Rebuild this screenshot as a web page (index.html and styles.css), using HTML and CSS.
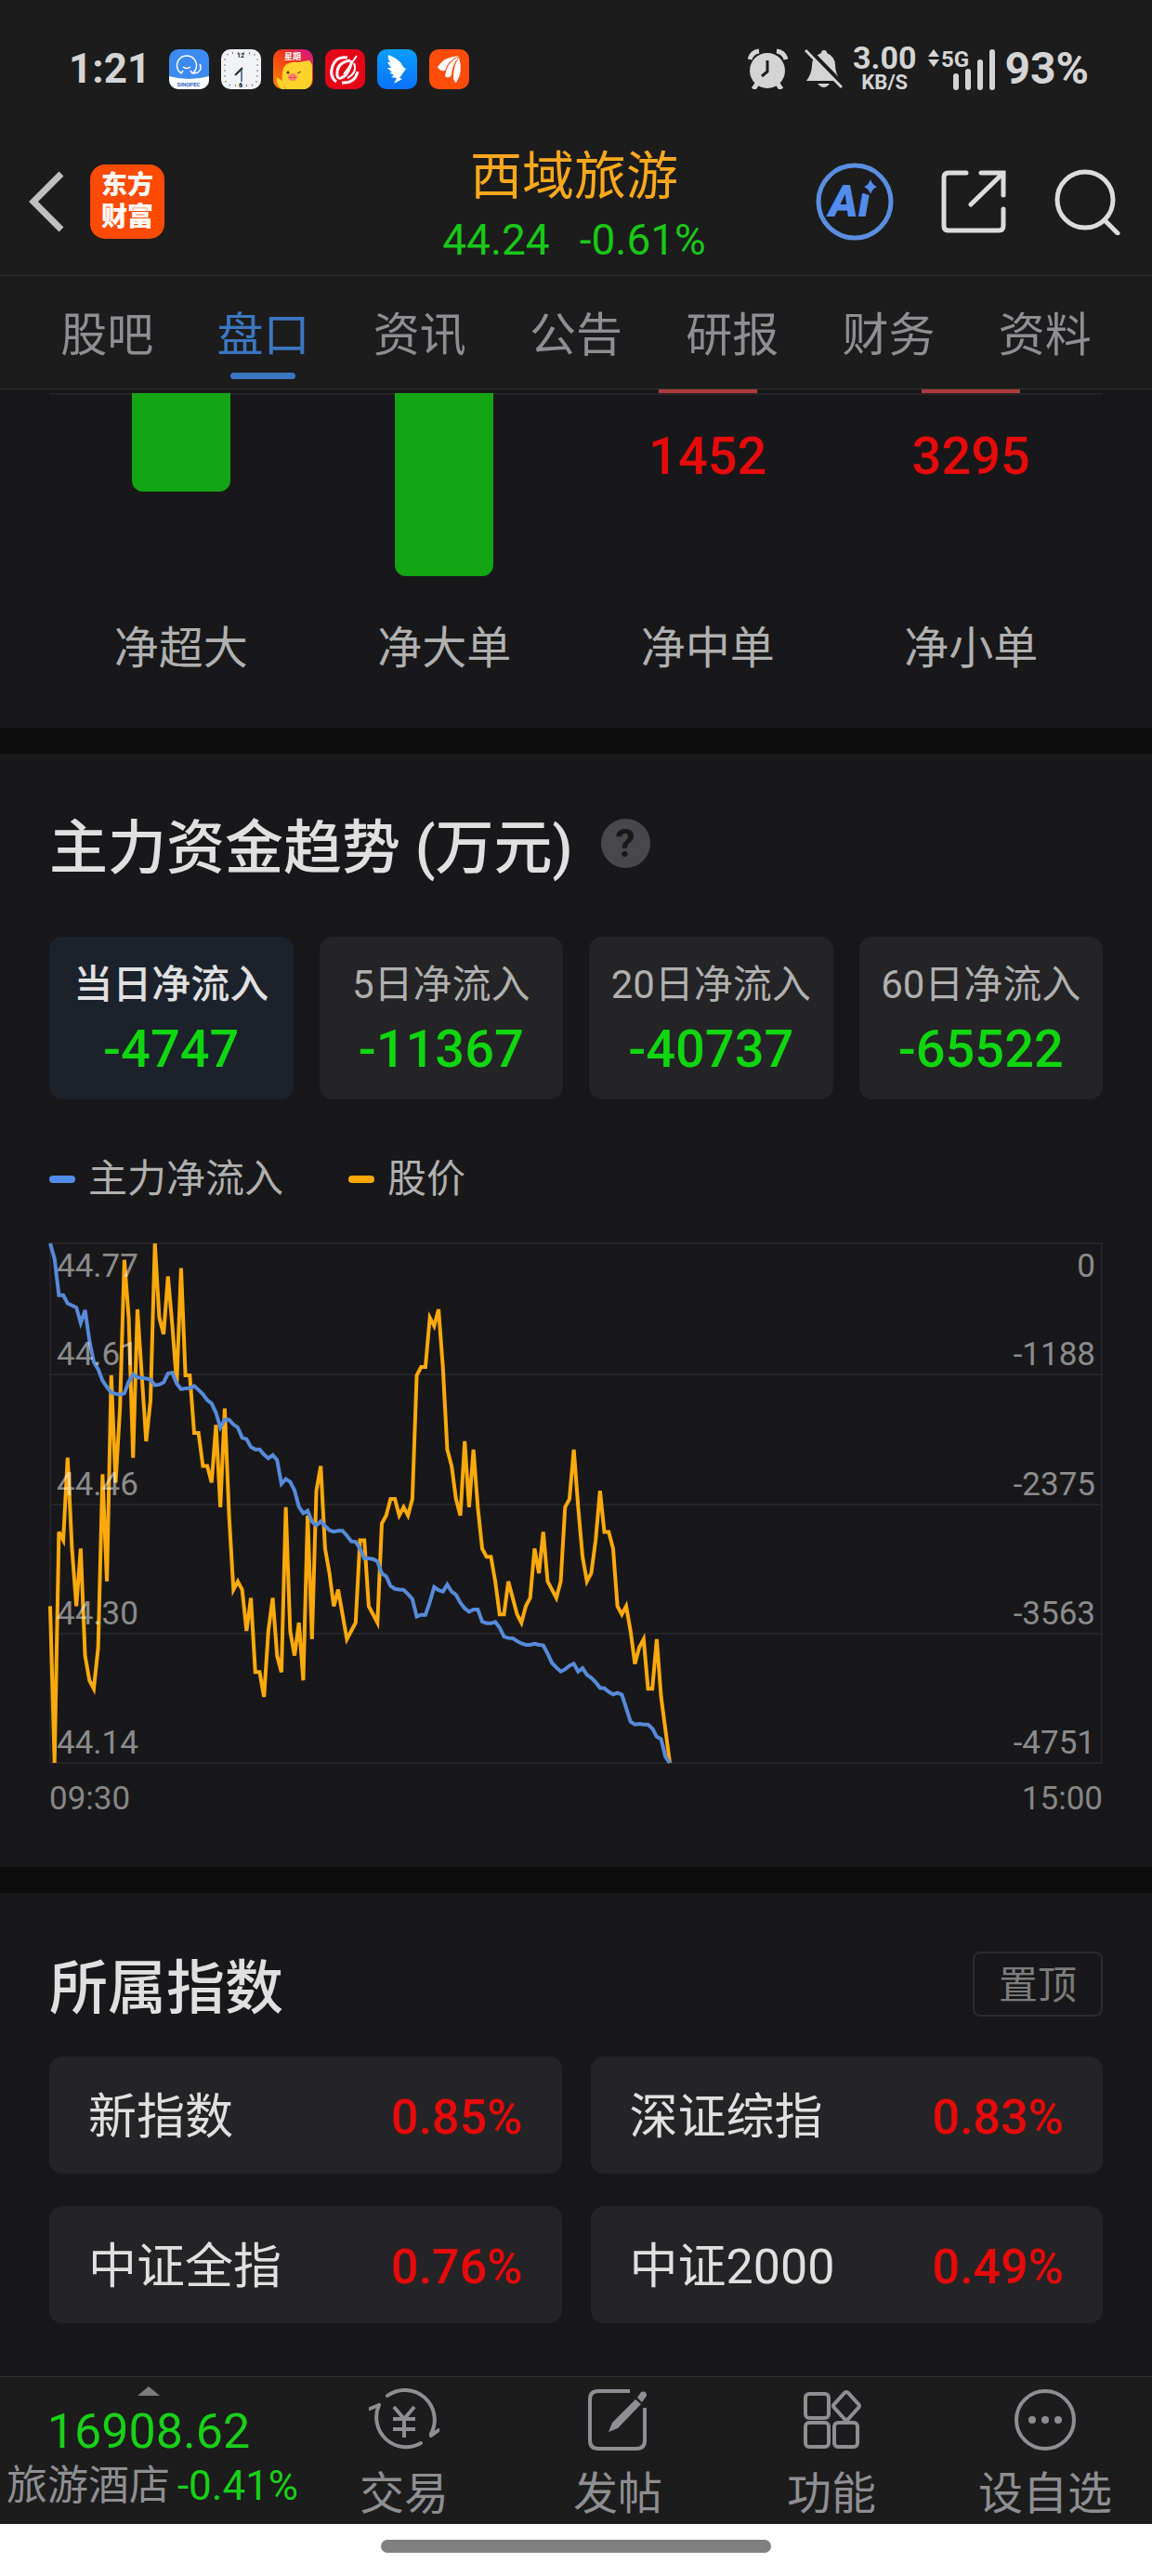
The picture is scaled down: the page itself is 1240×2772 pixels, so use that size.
FILE: index.html
```
<!DOCTYPE html>
<html lang="zh-CN">
<head>
    <meta charset="UTF-8">
    <meta name="viewport" content="width=device-width, initial-scale=1.0">
    <title>西域旅游</title>
    <link rel="stylesheet" href="styles.css">
</head>
<body>
    <div class="status-bar">
        <div class="status-left">
            <span class="clock">1:21</span>
            <svg class="app-icon" viewBox="0 0 43 43">
                <rect width="43" height="43" rx="10" fill="#3d8bf0"/>
                <path d="M0 29q21 6 43 0v4a10 10 0 0 1-10 10H10A10 10 0 0 1 0 33z" fill="#fff"/>
                <path d="M13 26a10.500 10.500 0 1 1 12 0l-2-3M13 26l2-3M15 19q4 3 8 0M33 16q3 5-2 9l-5 1" fill="none" stroke="#fff" stroke-width="1.500"/>
                <text x="21" y="40" class="sinopec">SINOPEC</text>
            </svg>
            <svg class="app-icon" viewBox="0 0 43 43">
                <rect width="43" height="43" rx="10" fill="#f1f3f6"/>
                <rect x="4" y="4" width="35" height="35" rx="8" fill="none" stroke="#777" stroke-width="2" stroke-dasharray="1 5"/>
                <path d="M22 21v14" stroke="#6a7fa0" stroke-width="2"/>
                <path d="M23 20l-8 8" stroke="#222c40" stroke-width="2"/>
                <text x="21" y="9" class="dial">12</text>
                <text x="21" y="41" class="dial">6</text>
            </svg>
            <svg class="app-icon" viewBox="0 0 43 43">
                <defs>
                    <linearGradient id="pig" x1="0" y1="1" x2="1" y2="0">
                        <stop offset="0" stop-color="#ff8a00"/>
                        <stop offset="0.6" stop-color="#f2331a"/>
                        <stop offset="1" stop-color="#d1159a"/>
                    </linearGradient>
                    <linearGradient id="wing" x1="0" y1="0" x2="0" y2="1">
                        <stop offset="0" stop-color="#0a9dff"/>
                        <stop offset="1" stop-color="#0b72fb"/>
                    </linearGradient>
                </defs>
                <rect width="43" height="43" rx="10" fill="url(#pig)"/>
                <path d="M10 24q2-12 17-10l12-2q4 4 3 10v11a10 10 0 0 1-8 10H14q-6-8-4-19z" fill="#ffd22e"/>
                <path d="M4 30l7 5 2 8H9q-6-5-5-13z" fill="#ffd22e"/>
                <ellipse cx="21" cy="30" rx="5" ry="4" fill="#ff7f6a"/>
                <circle cx="16" cy="25" r="1.500" fill="#532"/>
                <path d="M26 26l4-2" stroke="#532"/>
                <path d="M19 30v1M23 30v1" stroke="#b03a2a" stroke-width="2"/>
                <text x="21" y="11" class="week">星期</text>
            </svg>
            <svg class="app-icon" viewBox="0 0 43 43">
                <rect width="43" height="43" rx="10" fill="#e60517"/>
                <g fill="none" stroke="#fff" stroke-width="3">
                    <path d="M24 9Q12 7 8 18t4 17M18 36q14 1 17-12M27 12Q14 14 13 24t6 6q6-2 10-18"/>
                    <path d="M34 7L20 27M31 15q4 10-7 16" stroke-width="2"/>
                </g>
            </svg>
            <svg class="app-icon" viewBox="0 0 43 43">
                <rect width="43" height="43" rx="10" fill="url(#wing)"/>
                <path d="M12 6q13 5 16 13l3 2-7 10 3 1-9 5 3-6-6-1 3-2-5-3h3l-5-5h4l-4-6h3q-3-4-2-8z" fill="#fff"/>
            </svg>
            <svg class="app-icon" viewBox="0 0 43 43">
                <rect width="43" height="43" rx="10" fill="#ff4c0a"/>
                <path d="M9 19Q16 8 32 7 20 12 17 23q-6 1-8-4zM17 29Q19 13 32 8q-8 10-8 20-3 4-7 1zM26 30q0-13 6-21 5 15-3 27-3-1-3-6z" fill="#fff"/>
            </svg>
        </div>
        <div class="status-right">
            <svg class="status-icon" viewBox="0 0 43 44">
                <circle cx="21" cy="24" r="19" fill="#d4d4d4"/>
                <path d="M10 38l-4 6M32 38l4 6M2 12q2-8 10-9M41 12q-2-8-10-9" fill="none" stroke="#d4d4d4" stroke-width="5"/>
                <path d="M21 13v12l-6 5" fill="none" stroke="#1c1c1c" stroke-width="3"/>
            </svg>
            <svg class="status-icon bell" viewBox="0 0 41 44">
                <path d="M21 2q3 0 3 3 9 4 9 13 0 9 6 17H2q6-8 6-17Q8 9 18 5q0-3 3-3zM14 38h13q-6 8-13 0z" fill="#d4d4d4"/>
                <path d="M3 0l40 41" stroke="#1c1c1c" stroke-width="5"/>
                <path d="M1 2l39 40" stroke="#d4d4d4" stroke-width="3"/>
            </svg>
            <div class="speed"><b>3.00</b><span>KB/S</span></div>
            <svg class="signal" viewBox="0 0 74 52">
                <path d="M0 13l6-8 6 8zM0 16h12l-6 8z" fill="#d4d4d4"/>
                <text x="14" y="24" class="net">5G</text>
                <path d="M30 34v12M43 29v17M56 19v27M69 8v38" stroke="#d4d4d4" stroke-width="6" stroke-linecap="round"/>
            </svg>
            <span class="battery">93%</span>
        </div>
    </div>

    <header class="header">
        <div class="header-left">
            <button type="button" class="icon-btn" aria-label="返回">
                <svg width="40" height="66" viewBox="0 0 40 66"><path d="M36 3L6 33l30 30" fill="none" stroke="#bfbfbf" stroke-width="7"/></svg>
            </button>
            <a href="#" class="logo">东方<br>财富</a>
        </div>
        <div class="stock">
            <h1>西域旅游</h1>
            <p><span>44.24</span><span>-0.61%</span></p>
        </div>
        <div class="header-right">
            <button type="button" class="icon-btn" aria-label="AI 助手">
                <svg width="84" height="84" viewBox="0 0 84 84">
                    <circle cx="42" cy="42" r="39" fill="none" stroke="#5a8ee0" stroke-width="5"/>
                    <text x="14" y="58" class="ai-text">Ai</text>
                    <circle cx="58" cy="25" r="10" fill="#1c1c1c"/>
                    <path d="M59 18q2 6 7 8-5 2-7 8-2-6-7-8 5-2 7-8z" fill="#528cec"/>
                </svg>
            </button>
            <button type="button" class="icon-btn" aria-label="分享">
                <svg width="70" height="70" viewBox="0 0 70 70">
                    <path d="M27 4H8q-5 0-5 5v52q0 5 5 5h54q5 0 5-5V43M43 4h24v24M66 5L32 38" fill="none" stroke="#dcdcdc" stroke-width="5" stroke-linecap="round"/>
                </svg>
            </button>
            <button type="button" class="icon-btn" aria-label="搜索">
                <svg width="72" height="72" viewBox="0 0 72 72">
                    <circle cx="34" cy="34" r="30" fill="none" stroke="#dcdcdc" stroke-width="5"/>
                    <path d="M55 56l14 14" stroke="#dcdcdc" stroke-width="5" stroke-linecap="round"/>
                </svg>
            </button>
        </div>
    </header>

    <nav class="tabs">
        <a href="#">股吧</a>
        <a href="#" class="active">盘口</a>
        <a href="#">资讯</a>
        <a href="#">公告</a>
        <a href="#">研报</a>
        <a href="#">财务</a>
        <a href="#">资料</a>
    </nav>

    <main>
        <section class="orders">
            <div class="order-bars">
                <div class="order"><div class="bar bar-down" style="height: 106px"></div></div>
                <div class="order"><div class="bar bar-down" style="height: 197px"></div></div>
                <div class="order"><div class="bar bar-up"></div><span class="amount">1452</span></div>
                <div class="order"><div class="bar bar-up"></div><span class="amount">3295</span></div>
            </div>
            <div class="order-labels">
                <span>净超大</span>
                <span>净大单</span>
                <span>净中单</span>
                <span>净小单</span>
            </div>
        </section>

        <section class="trend">
            <div class="trend-title">
                <h2>主力资金趋势 (万元)</h2>
                <button type="button" class="help" aria-label="说明">?</button>
            </div>
            <div class="periods">
                <button type="button" class="period active"><span>当日净流入</span><b>-4747</b></button>
                <button type="button" class="period"><span>5日净流入</span><b>-11367</b></button>
                <button type="button" class="period"><span>20日净流入</span><b>-40737</b></button>
                <button type="button" class="period"><span>60日净流入</span><b>-65522</b></button>
            </div>
            <div class="legend">
                <span class="legend-item flow">主力净流入</span>
                <span class="legend-item price">股价</span>
            </div>
            <div class="chart">
                <svg class="lines" viewBox="0 0 241 560" preserveAspectRatio="none">
                    <polyline id="priceLine" class="price-line"/>
                    <polyline id="flowLine" class="flow-line"/>
                </svg>
                <div class="band first">
                    <div><span>44.77</span><span>0</span></div>
                    <div><span>44.61</span><span>-1188</span></div>
                </div>
                <div class="band"><div><span>44.46</span><span>-2375</span></div></div>
                <div class="band"><div><span>44.30</span><span>-3563</span></div></div>
                <div class="band"><div><span>44.14</span><span>-4751</span></div></div>
            </div>
            <div class="times"><span>09:30</span><span>15:00</span></div>
        </section>

        <section class="indices">
            <div class="indices-title">
                <h2>所属指数</h2>
                <button type="button" class="pin">置顶</button>
            </div>
            <div class="index-grid">
                <a href="#" class="index"><span>新指数</span><b>0.85%</b></a>
                <a href="#" class="index"><span>深证综指</span><b>0.83%</b></a>
                <a href="#" class="index"><span>中证全指</span><b>0.76%</b></a>
                <a href="#" class="index"><span>中证2000</span><b>0.49%</b></a>
            </div>
        </section>
    </main>

    <footer class="toolbar">
        <a href="#" class="sector">
            <svg width="24" height="10" viewBox="0 0 24 10"><path d="M0 10L12 0l12 10z" fill="#7d7d80"/></svg>
            <b>16908.62</b>
            <span class="sector-row"><span>旅游酒店</span><i>-0.41%</i></span>
        </a>
        <button type="button" class="tool">
            <svg width="76" height="70" viewBox="0 0 76 70">
                <path d="M20 9A32 32 0 0 1 67 50M56 60A32 32 0 0 1 11 19M1 23l10-4v0M67 52l8-6" fill="none" stroke="#8e8e93" stroke-width="4" stroke-linecap="round"/>
                <path d="M27 21l11 13 11-13M38 34v20M26 34h24M26 45h24" fill="none" stroke="#8e8e93" stroke-width="4"/>
            </svg>
            交易
        </button>
        <button type="button" class="tool">
            <svg width="66" height="70" viewBox="0 0 66 70">
                <path d="M46 4H12q-9 0-9 9v44q0 9 9 9h41q9 0 9-9V22" fill="none" stroke="#8e8e93" stroke-width="4"/>
                <path d="M52 13l6 5-25 26-10 4 4-10zM54 11l4-6q6-2 6 4l-5 7z" fill="#8e8e93"/>
            </svg>
            发帖
        </button>
        <button type="button" class="tool">
            <svg width="64" height="70" viewBox="0 0 64 70">
                <g fill="none" stroke="#8e8e93" stroke-width="4">
                    <rect x="4" y="7" width="25" height="26" rx="4"/>
                    <rect x="4" y="38" width="25" height="26" rx="4"/>
                    <rect x="35" y="38" width="25" height="26" rx="4"/>
                    <path d="M46 6q2-2 4 0l11 12q2 2 0 4L50 34q-2 2-4 0L35 22q-2-2 0-4z"/>
                </g>
            </svg>
            功能
        </button>
        <button type="button" class="tool">
            <svg width="68" height="70" viewBox="0 0 68 70">
                <circle cx="34" cy="35" r="31" fill="none" stroke="#8e8e93" stroke-width="4"/>
                <g fill="#8e8e93"><circle cx="20" cy="35" r="4"/><circle cx="34" cy="35" r="4"/><circle cx="48" cy="35" r="4"/></g>
            </svg>
            设自选
        </button>
    </footer>
    <div class="home-bar"><span></span></div>

    <script src="chart.js"></script>
</body>
</html>
```
FILE: styles.css
```
* { box-sizing: border-box; }
body { margin: 0; background: #18181a; color: #e0e0e0; font-family: Roboto, "Noto Sans CJK SC", sans-serif; }
h1, h2, p { margin: 0; font-weight: 400; }
b { font-weight: 400; }
i { font-style: normal; }
a { color: inherit; text-decoration: none; }
button { padding: 0; border: none; background: none; color: inherit; font-family: inherit; cursor: pointer; }
svg { display: block; flex: none; }

/* status bar */
.status-bar { display: flex; justify-content: space-between; align-items: flex-start; height: 138px; padding: 48px 68px 0 74px; background: #1c1c1c; color: #d4d4d4; }
.status-left, .status-right { display: flex; align-items: center; height: 52px; }
.status-left { gap: 13px; }
.clock { width: 95px; font-size: 44px; font-weight: 700; line-height: 44px; }
.app-icon { width: 43px; height: 43px; }
.sinopec { font-size: 6px; font-weight: 700; fill: #1d5fc0; text-anchor: middle; }
.dial { font-size: 7px; font-weight: 700; fill: #222; text-anchor: middle; }
.week { font-size: 9px; font-weight: 700; fill: #fff; text-anchor: middle; }
.status-icon { width: 43px; height: 44px; }
.bell { width: 41px; margin-left: 18px; }
.speed { display: flex; flex-direction: column; align-items: center; margin: 0 13px 0 11px; }
.speed b { font-size: 34px; font-weight: 700; line-height: 30px; }
.speed span { font-size: 22px; font-weight: 700; line-height: 24px; }
.signal { width: 74px; height: 52px; overflow: visible; }
.net { font-size: 24px; font-weight: 700; fill: #d4d4d4; }
.battery { margin-left: 8px; font-size: 48px; font-weight: 700; line-height: 48px; }

/* header */
.header { display: grid; grid-template-columns: 1fr auto 1fr; align-items: center; height: 159px; padding: 0 34px 0 30px; border-bottom: 1px solid #333; background: #1c1c1c; }
.header-left, .header-right { display: flex; align-items: center; }
.header-left { gap: 27px; }
.header-right { justify-content: flex-end; gap: 51px; }
.logo { width: 80px; height: 80px; padding-top: 6px; border-radius: 16px; background: #ff4a04; color: #fff; font-size: 28px; font-weight: 900; line-height: 34px; text-align: center; }
.ai-text { font-size: 48px; font-weight: 900; font-style: italic; fill: #528cec; }
.stock { padding-top: 14px; text-align: center; }
.stock h1 { color: #fba81c; font-size: 56px; line-height: 68px; }
.stock p { display: flex; gap: 32px; color: #18c818; font-size: 46px; line-height: 68px; }

/* tabs */
.tabs { display: flex; height: 122px; padding: 0 31px; border-bottom: 1px solid #333; background: #1c1c1c; }
.tabs a { position: relative; flex: 1; color: #8e8e93; font-size: 50px; line-height: 128px; text-align: center; }
.tabs .active { color: #3a77c2; }
.tabs .active::after { content: ""; position: absolute; left: calc(50% - 35px); top: 104px; width: 70px; height: 7px; border-radius: 4px; background: #3a77c2; }

/* order sizes */
.orders { padding: 0 53px 61px; }
.order-bars { display: grid; grid-template-columns: repeat(4, 1fr); height: 255px; background: linear-gradient(#242426, #242426) 0 4px / 100% 2px no-repeat; }
.order { display: flex; flex-direction: column; align-items: center; }
.bar { width: 106px; }
.bar-down { margin-top: 4px; border-radius: 0 0 12px 12px; background: #13a513; }
.bar-up { height: 4px; background: #ae3b3b; }
.amount { margin-top: 40px; color: #e60a0a; font-size: 56px; font-weight: 500; line-height: 56px; }
.order-labels { display: grid; grid-template-columns: repeat(4, 1fr); color: #b0b0b0; font-size: 48px; line-height: 48px; text-align: center; }

/* fund trend */
.trend { padding: 70px 53px 55px; border-top: 28px solid #0c0c0c; }
h2 { font-size: 63px; font-weight: 500; line-height: 64px; }
.trend-title { display: flex; align-items: flex-start; gap: 30px; }
.help { width: 53px; height: 53px; border-radius: 50%; background: #48484c; color: #18181a; font-size: 42px; font-weight: 700; line-height: 53px; }
.periods { display: grid; grid-template-columns: repeat(4, 1fr); gap: 28px; margin-top: 63px; }
.period { display: flex; flex-direction: column; align-items: center; gap: 17px; padding: 28px 0 26px; border-radius: 14px; background: #242426; white-space: nowrap; }
.period span { color: #b0b0b0; font-size: 42px; line-height: 48px; }
.period b { color: #0fd60f; font-size: 56px; font-weight: 500; line-height: 56px; }
.period.active { background: #1b222c; }
.period.active span { color: #e0e0e0; font-weight: 500; }
.legend { display: flex; gap: 70px; margin-top: 61px; color: #b0b0b0; font-size: 42px; line-height: 50px; }
.legend-item { display: flex; align-items: center; gap: 14px; }
.legend-item::before { content: ""; width: 28px; height: 8px; border-radius: 4px; }
.flow::before { background: #528cec; }
.price::before { background: #ffa808; }

.chart { position: relative; display: grid; grid-template-rows: repeat(4, 1fr); height: 561px; margin-top: 43px; border: 2px solid #252527; }
.lines { position: absolute; top: -1px; left: -1px; width: calc(100% + 2px); height: calc(100% + 2px); overflow: visible; }
.lines polyline { fill: none; stroke-width: 4px; vector-effect: non-scaling-stroke; }
.price-line { stroke: #fda90c; }
.flow-line { stroke: #578ada; }
.band { display: flex; flex-direction: column; justify-content: flex-end; padding: 6px 6px 2px; border-top: 2px solid #252527; }
.band.first { justify-content: space-between; border-top: none; }
.band div { position: relative; display: flex; justify-content: space-between; color: rgba(255, 255, 255, 0.5); font-size: 35px; line-height: 36px; }
.times { display: flex; justify-content: space-between; margin-top: 20px; color: #868686; font-size: 35px; line-height: 36px; }

/* indices */
.indices { padding: 63px 53px 57px; border-top: 28px solid #0c0c0c; }
.indices-title { display: flex; justify-content: space-between; align-items: flex-end; }
.indices-title h2 { line-height: 60px; }
.pin { width: 140px; height: 70px; padding-top: 3px; border: 2px solid #2c2c2e; border-radius: 8px; color: #7c7c7c; font-size: 42px; line-height: 48px; }
.index-grid { display: grid; grid-template-columns: 1fr 1fr; gap: 35px 31px; margin-top: 43px; }
.index { display: flex; justify-content: space-between; align-items: center; height: 126px; padding: 6px 42px 0; border-radius: 14px; background: #242426; font-size: 52px; line-height: 60px; }
.index b { color: #e60a0a; font-weight: 500; }

/* bottom toolbar */
.toolbar { display: flex; height: 159px; border-top: 1px solid #333; background: #1c1c1c; color: #8e8e93; }
.sector { display: flex; flex-direction: column; align-items: center; width: 320px; padding-top: 10px; font-size: 44px; }
.sector b { margin-top: 9px; color: #18d018; font-size: 52px; line-height: 60px; }
.sector-row { display: flex; gap: 8px; margin-left: 8px; line-height: 56px; white-space: nowrap; }
.sector i { color: #18d018; }
.tool { display: flex; flex: 1; flex-direction: column; align-items: center; gap: 19px; padding-top: 11px; font-size: 48px; line-height: 52px; }
.home-bar { display: flex; justify-content: center; height: 56px; padding-top: 17px; background: #fff; }
.home-bar span { width: 420px; height: 14px; border-radius: 7px; background: #808080; }
```
FILE: chart.js
```
// share price by minute, in cents above 44.00
const price = [
    33, 14, 42, 41, 51, 40, 33, 40, 27, 24, 23, 28, 49, 36, 61, 48, 57, 75, 68, 51,
    69, 61, 53, 58, 77, 68, 66, 73, 67, 60, 74, 61, 61, 54, 54, 50, 50, 48, 55, 45,
    57, 44, 35, 36, 35, 30, 34, 25, 25, 22, 30, 34, 27, 25, 45, 30, 27, 31, 24, 44,
    29, 47, 50, 40, 37, 33, 35, 32, 29, 30, 31, 41, 41, 33, 32, 31, 43, 44, 46, 46,
    44, 45, 44, 46, 61, 62, 62, 68, 67, 69, 62, 52, 50, 46, 44, 53, 45, 52, 45, 40,
    39, 39, 36, 32, 32, 36, 34, 32, 31, 33, 34, 40, 37, 42, 36, 35, 34, 36, 45, 46,
    52, 45, 39, 36, 37, 41, 47, 42, 42, 40, 33, 32, 33, 30, 26, 28, 29, 23, 23, 29,
    22, 18, 14
];

// net outflow by minute
const flow = [
    0, 140, 473, 473, 548, 567, 587, 727, 610, 890, 1086, 1151, 1255, 1314, 1363, 1376, 1382, 1372, 1265, 1200,
    1226, 1229, 1236, 1245, 1297, 1291, 1271, 1190, 1183, 1284, 1333, 1327, 1324, 1304, 1340, 1379, 1434, 1464, 1549, 1682,
    1614, 1614, 1656, 1685, 1777, 1790, 1861, 1884, 1884, 1933, 1966, 1936, 1982, 2200, 2155, 2181, 2259, 2409, 2468, 2445,
    2546, 2579, 2543, 2585, 2624, 2637, 2628, 2628, 2673, 2725, 2729, 2791, 2882, 2882, 2888, 2908, 3019, 3045, 3133, 3159,
    3165, 3169, 3208, 3253, 3413, 3397, 3397, 3280, 3143, 3172, 3185, 3120, 3185, 3214, 3286, 3338, 3368, 3348, 3348, 3459,
    3475, 3475, 3462, 3514, 3596, 3609, 3612, 3638, 3658, 3671, 3671, 3661, 3671, 3677, 3752, 3837, 3879, 3915, 3896, 3863,
    3844, 3915, 3886, 3945, 3974, 4013, 4065, 4068, 4101, 4124, 4111, 4127, 4248, 4375, 4401, 4394, 4401, 4401, 4437, 4512,
    4535, 4694, 4751
];

const draw = (id, values, toY) => {
    const points = values.map((v, i) => `${i},${toY(v).toFixed(1)}`).join(' ');
    document.getElementById(id).setAttribute('points', points);
};

draw('priceLine', price, (v) => (77 - v) / 63 * 560);
draw('flowLine', flow, (v) => v / 4751 * 560);
```
